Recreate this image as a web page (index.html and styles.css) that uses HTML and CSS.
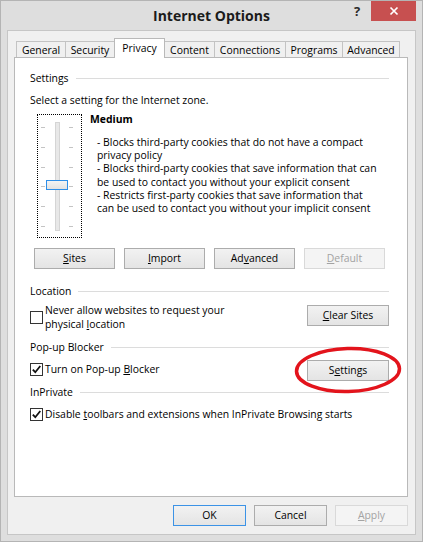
FILE: index.html
```html
<!DOCTYPE html>
<html lang="en">
<head>
  <meta charset="UTF-8">
  <title>Internet Options</title>
  <link rel="stylesheet" href="styles.css">
</head>
<body>
  <div class="window">
    <div class="titlebar">
      <span class="title">Internet Options</span>
      <div class="caption-btns">
        <span class="help">?</span>
        <span class="close">
          <svg width="10" height="10" viewBox="0 0 10 10"><path d="M1.5 1.5 L8.5 8.5 M8.5 1.5 L1.5 8.5" stroke="#fff" stroke-width="1.7"/></svg>
        </span>
      </div>
    </div>

    <div class="client">
      <div class="tabs">
        <div class="tab t-general">General</div>
        <div class="tab t-security">Security</div>
        <div class="tab t-privacy active">Privacy</div>
        <div class="tab t-content">Content</div>
        <div class="tab t-connections">Connections</div>
        <div class="tab t-programs">Programs</div>
        <div class="tab t-advanced">Advanced</div>
      </div>

      <div class="panel">
        <div class="group-head">Settings</div>
        <p class="hint">Select a setting for the Internet zone.</p>

        <div class="zone">
          <div class="slider">
            <div class="ticks"><i></i><i></i><i></i><i></i><i></i><i></i></div>
            <div class="track"></div>
            <div class="ticks"><i></i><i></i><i></i><i></i><i></i><i></i></div>
            <div class="thumb"></div>
          </div>
          <div class="zone-text">
            <div class="level">Medium</div>
            <div class="level-desc">
              - Blocks third-party cookies that do not have a compact<br>
              privacy policy<br>
              - Blocks third-party cookies that save information that can<br>
              be used to contact you without your explicit consent<br>
              - Restricts first-party cookies that save information that<br>
              can be used to contact you without your implicit consent
            </div>
          </div>
        </div>

        <div class="btn-row">
          <button class="btn"><u>S</u>ites</button>
          <button class="btn"><u>I</u>mport</button>
          <button class="btn">Ad<u>v</u>anced</button>
          <button class="btn" disabled><u>D</u>efault</button>
        </div>

        <div class="group-head head-location">Location</div>
        <div class="opt-row row-location">
          <label class="check">
            <span class="box"></span>
            <span>Never allow websites to request your<br>physical <u>l</u>ocation</span>
          </label>
          <button class="btn btn-wide btn-clear"><u>C</u>lear Sites</button>
        </div>

        <div class="group-head head-popup">Pop-up Blocker</div>
        <div class="opt-row row-popup">
          <label class="check">
            <span class="box checked"><svg width="11" height="11" viewBox="0 0 11 11"><path d="M1.8 5.6 L4.3 8.2 L9.3 2" fill="none" stroke="#111" stroke-width="1.8"/></svg></span>
            <span>Turn on Pop-up <u>B</u>locker</span>
          </label>
          <div class="marked">
            <button class="btn btn-wide">S<u>e</u>ttings</button>
            <svg class="ring" width="108" height="48" viewBox="0 0 108 48"><ellipse cx="54" cy="24" rx="51.5" ry="21.5" fill="none" stroke="#e3141c" stroke-width="3.5" transform="rotate(-1.5 54 24)"/></svg>
          </div>
        </div>

        <div class="group-head head-private">InPrivate</div>
        <div class="opt-row row-private">
          <label class="check">
            <span class="box checked"><svg width="11" height="11" viewBox="0 0 11 11"><path d="M1.8 5.6 L4.3 8.2 L9.3 2" fill="none" stroke="#111" stroke-width="1.8"/></svg></span>
            <span>Disable <u>t</u>oolbars and extensions when InPrivate Browsing starts</span>
          </label>
        </div>
      </div>

      <div class="dialog-buttons">
        <button class="btn btn-dlg btn-default">OK</button>
        <button class="btn btn-dlg">Cancel</button>
        <button class="btn btn-dlg" disabled><u>A</u>pply</button>
      </div>
    </div>
  </div>
</body>
</html>
```

FILE: styles.css
```css
* { box-sizing: border-box; }
body { margin: 0; font-family: "Open Sans", "Noto Sans", sans-serif; font-size: 10.4px; color: #000; background: #dedede; }
p { margin: 0; }

.window { width: 423px; height: 542px; border: 1px solid #b4b4b4; background: #dedede; }

.titlebar { height: 29px; display: grid; grid-template-columns: 1fr auto 1fr; align-items: start; }
.title { grid-column: 2; font-weight: 700; font-size: 14px; line-height: 29px; color: #1b1b1b; }
.caption-btns { grid-column: 3; justify-self: end; display: flex; margin-right: 6px; }
.help { width: 28px; height: 20px; line-height: 20px; text-align: center; font-weight: 700; font-size: 13px; color: #2b2b2b; }
.close { width: 45px; height: 20px; background: #c75050; display: flex; align-items: center; justify-content: center; }

.client { margin: 0 6px; height: 505px; border: 1px solid #c6c6c6; background: #f0f0f0; padding: 7px 7px 0 6px; }

.tabs { display: flex; align-items: flex-end; height: 19px; margin-left: 2px; position: relative; z-index: 1; }
.tab { height: 16px; border: 1px solid #c3c3c3; border-bottom: none; margin-left: -1px; text-align: center; line-height: 16px; background: #f0f0f0; }
.tab:first-child { margin-left: 0; }
.tab.active { height: 20px; margin-bottom: -1px; background: #fff; border-color: #b9b9b9; line-height: 19px; position: relative; z-index: 2; }
.t-general, .t-security { width: 50px; }
.t-privacy, .t-content { width: 51px; }
.t-connections { width: 72px; }
.t-programs, .t-advanced { width: 58px; }

.panel { height: 440px; border: 1px solid #b9b9b9; background: #fff; padding: 13px 18px 0 15px; }

.group-head { display: flex; align-items: center; gap: 7px; line-height: 14px; }
.group-head::after { content: ""; flex: 1; height: 1px; background: #dcdcdc; }
.hint { margin-top: 8px; line-height: 14px; }

.zone { display: flex; margin-top: 7px; }
.slider { position: relative; width: 45px; height: 124px; margin-left: 7px; border: 1px dotted #000; display: flex; padding-left: 3px; }
.ticks { width: 4px; display: flex; flex-direction: column; justify-content: space-between; padding: 12px 0 10px; }
.ticks i { display: block; height: 1px; background: #c4c4c4; }
.track { width: 5px; height: 109px; margin: 7px 9px 0 10px; background: #e8e8e8; border: 1px solid #d5d5d5; }
.thumb { position: absolute; left: 8px; top: 65px; width: 22px; height: 10px; border: 1px solid #2f8fe8; background: linear-gradient(#f4f4f4, #e2e2e2); }

.zone-text { margin-left: 8px; }
.level { font-weight: 700; line-height: 11px; }
.level-desc { margin: 11px 0 0 7px; line-height: 13.2px; white-space: nowrap; }

.btn-row { display: flex; gap: 9px; margin: 10px 0 0 4px; }

.btn { font: inherit; color: #000; width: 81px; height: 21px; padding: 0; border: 1px solid #acacac; background: linear-gradient(#f2f2f2, #e4e4e4); line-height: 19px; text-align: center; }
.btn:disabled { color: #a3a3a3; border-color: #d9d9d9; background: #f4f4f4; }
.btn-wide { width: 82px; }
.btn-default { border-color: #3c93e6; }

.head-location { margin-top: 15px; }
.opt-row { display: flex; justify-content: space-between; align-items: flex-start; }
.row-location { margin-top: 5px; }
.btn-clear { margin-top: 2px; }
.head-popup { margin-top: 9px; }
.row-popup { margin-top: 6px; }
.row-popup .check { margin-top: 2px; }
.head-private { margin-top: 4px; }
.row-private { margin-top: 8px; }

.check { display: flex; align-items: center; gap: 2px; line-height: 14px; }
.row-location .check { align-items: flex-start; }
.row-location .box { margin-top: 8px; }
.box { width: 13px; height: 13px; border: 1px solid #333; background: #fff; display: flex; align-items: center; justify-content: center; flex: none; }

.marked { position: relative; }
.ring { position: absolute; left: -13px; top: -14px; pointer-events: none; }

.dialog-buttons { display: flex; justify-content: flex-end; gap: 8px; margin-top: 8px; }
.btn-dlg { width: 73px; }
```
